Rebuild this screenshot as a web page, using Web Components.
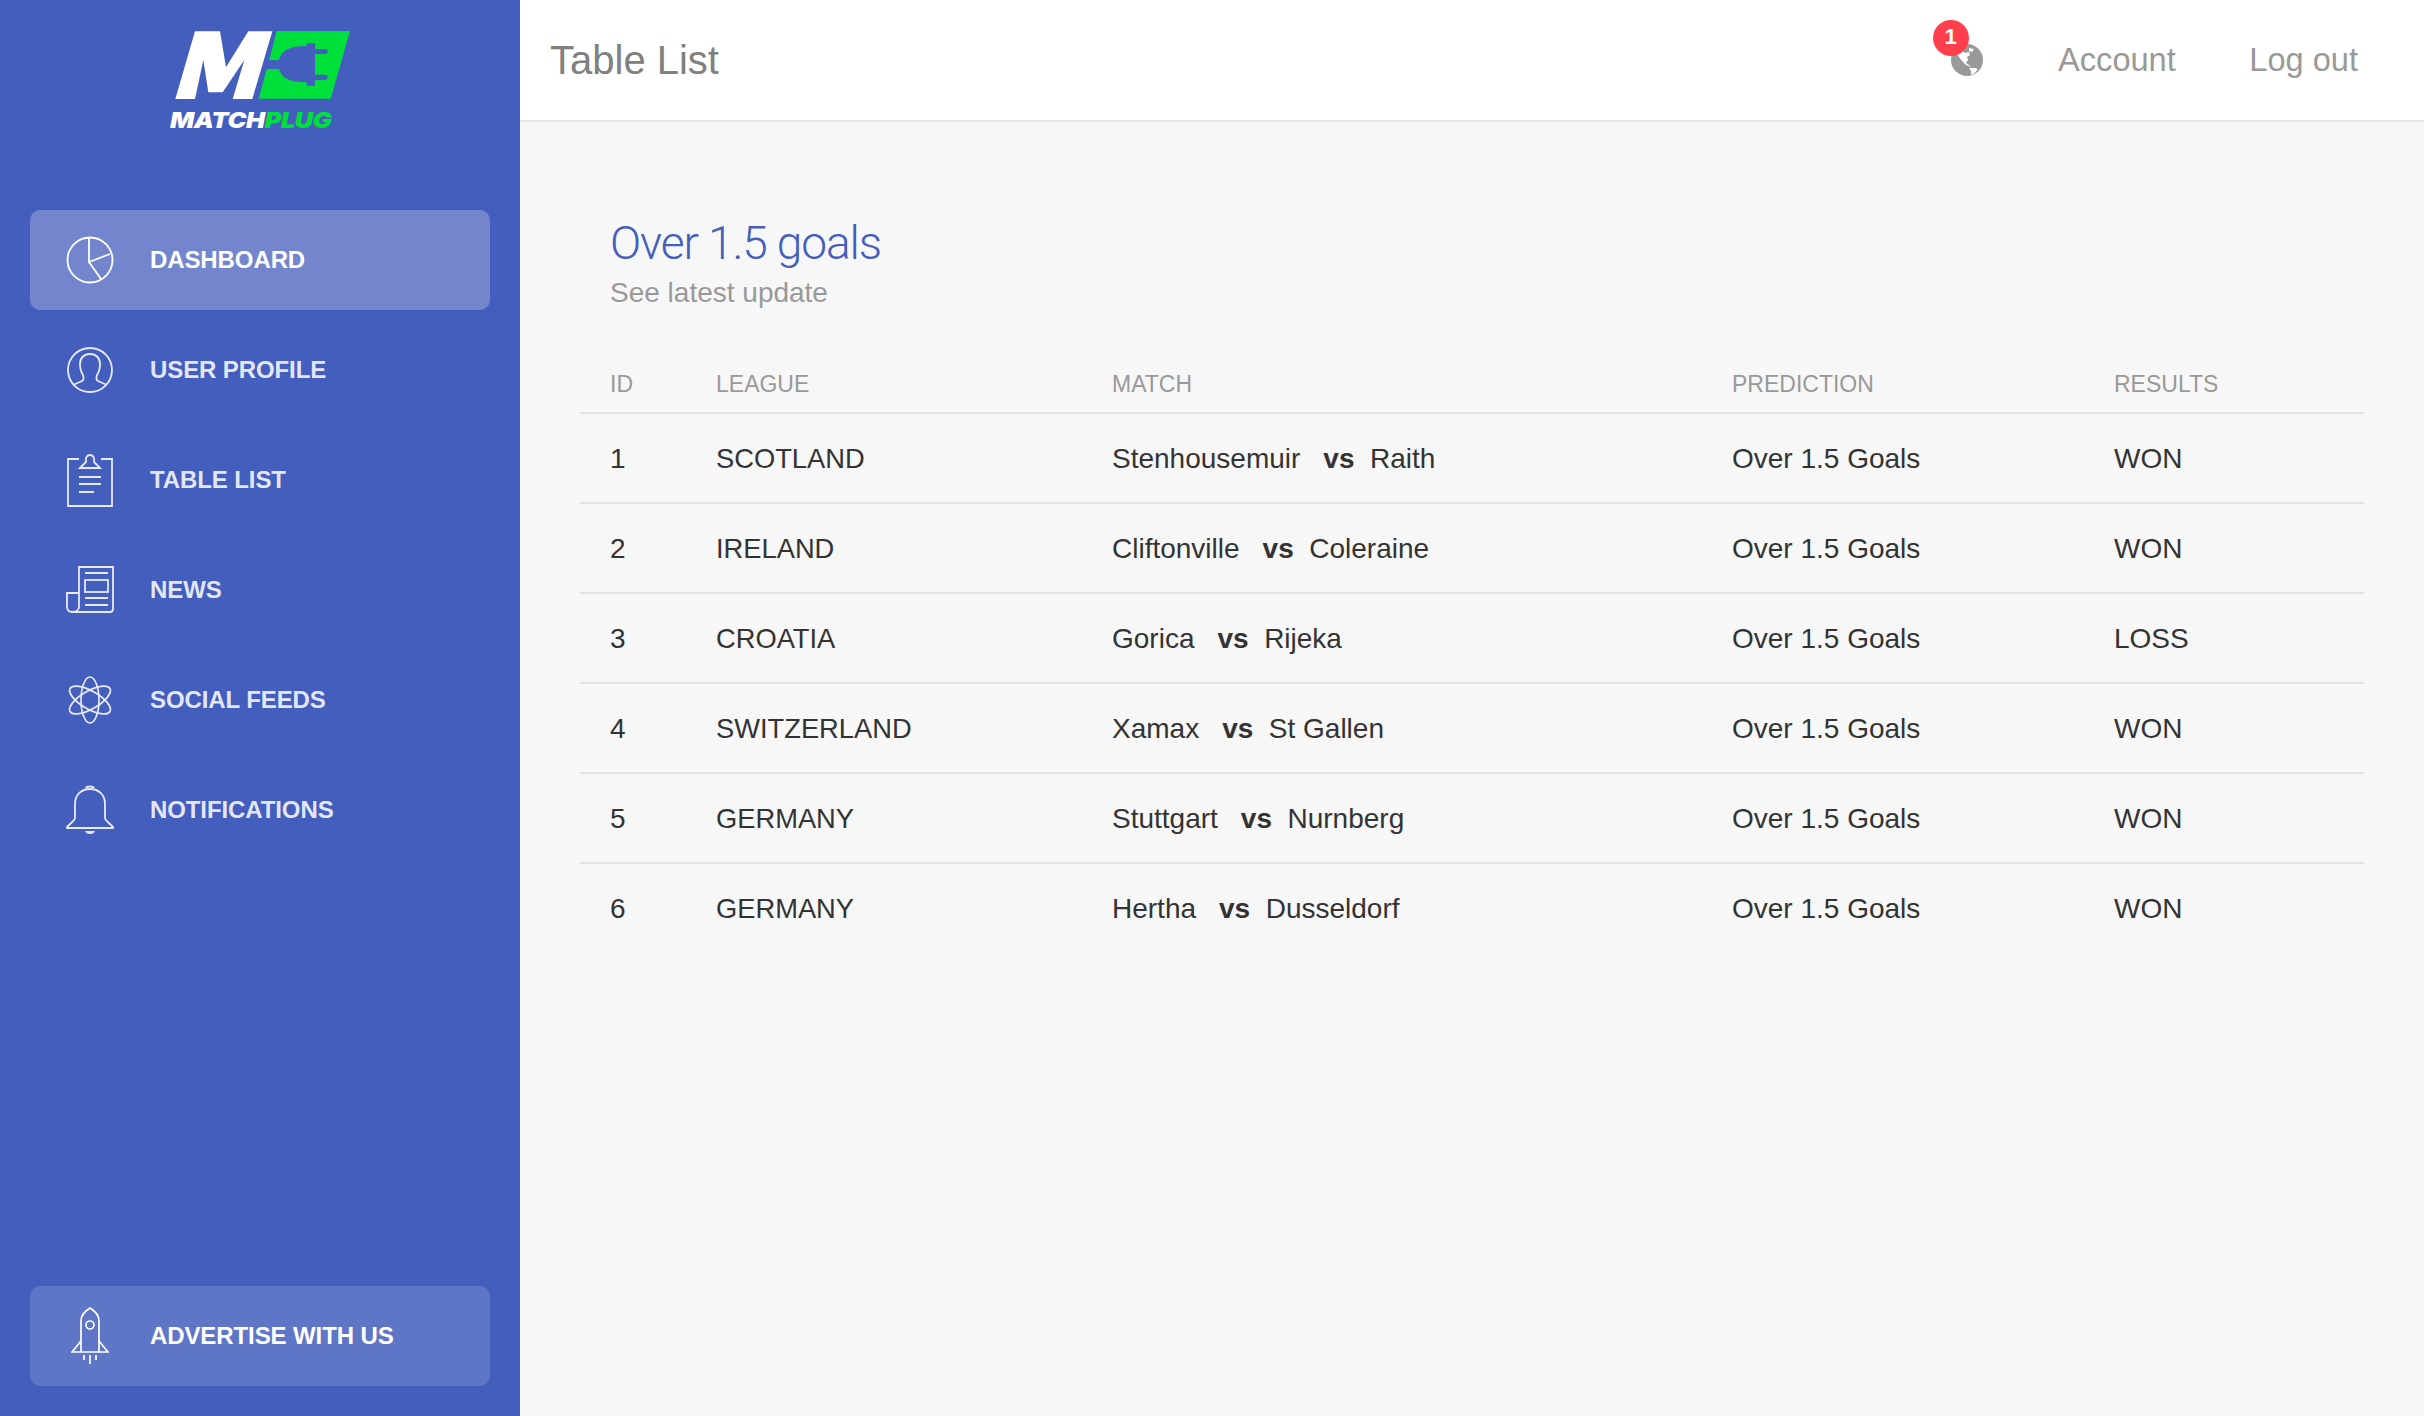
<!DOCTYPE html>
<html lang="en">
<head>
<meta charset="utf-8">
<title>Table List</title>
<style>
    html, body { margin: 0; height: 100%; }
    body { font-family: "Liberation Sans", Arial, sans-serif; background: #f7f7f7; }
</style>
</head>
<body>
<app-shell>
    <side-bar slot="side">
        <brand-logo slot="logo"></brand-logo>
        <nav-item active label="DASHBOARD">
            <svg width="48" height="48" viewBox="0 0 48 48" fill="none" stroke="#fff" stroke-width="1.8"><circle cx="24" cy="24" r="22.5"/><path d="M23 2v24l21-8M23 26l12 17"/></svg>
        </nav-item>
        <nav-item label="USER PROFILE">
            <svg width="48" height="48" viewBox="0 0 48 48" fill="none" stroke="#e6e9f6" stroke-width="1.8"><circle cx="24" cy="24" r="22"/><path d="M7 39l9-4c2-1 2-3 1-6-2-3-3-7-3-11 0-6 4-10 10-10s10 4 10 10c0 4-1 8-3 11-1 3-1 5 1 6l9 4"/></svg>
        </nav-item>
        <nav-item label="TABLE LIST">
            <svg width="46" height="54" viewBox="0 0 46 54" fill="none" stroke="#e6e9f6" stroke-width="1.8"><path d="M12 6H1v47h44V6H34"/><path d="M13 15l6-6c-1-4 1-7 4-7s5 3 4 7l6 6z"/><path d="M12 24h22M12 31h22M12 39h15"/></svg>
        </nav-item>
        <nav-item label="NEWS">
            <svg width="48" height="48" viewBox="0 0 48 48" fill="none" stroke="#e6e9f6" stroke-width="1.8"><path d="M13 41V1h34v42c0 2-1 3-3 3H6c-3 0-5-2-5-5V27h12"/><path d="M6 46c4 0 7-2 7-5"/><path d="M19 7h23M19 32h23M19 39h23"/><rect x="19" y="14" width="23" height="12"/></svg>
        </nav-item>
        <nav-item label="SOCIAL FEEDS">
            <svg width="44" height="48" viewBox="0 0 44 48" fill="none" stroke="#e6e9f6" stroke-width="1.7"><ellipse cx="22" cy="24" rx="9" ry="23"/><ellipse cx="22" cy="24" rx="9" ry="23" transform="rotate(60 22 24)"/><ellipse cx="22" cy="24" rx="9" ry="23" transform="rotate(120 22 24)"/></svg>
        </nav-item>
        <nav-item label="NOTIFICATIONS">
            <svg width="48" height="50" viewBox="0 0 48 50" fill="none" stroke="#e6e9f6" stroke-width="1.8"><path d="M9 33V19C9 10 15 4 24 4s15 6 15 15v14c0 2 2 3 8 9v1H1v-1c6-6 8-7 8-9z"/><path d="M20 3c1-2 7-2 8 0" stroke-width="2"/><path d="M19 46h10c-1 4-9 4-10 0z" fill="#e6e9f6" stroke="none"/></svg>
        </nav-item>
        <nav-item slot="footer" promo label="ADVERTISE WITH US">
            <svg width="38" height="58" viewBox="0 0 38 58" fill="none" stroke="#fff" stroke-width="1.7"><path d="M10 45V14C10 9 14 4 19 1c5 3 9 8 9 13v31"/><circle cx="19" cy="18" r="4"/><path d="M10 34L1 45h36l-9-11"/><path d="M13 48v5M19 48v9M25 48v5"/></svg>
        </nav-item>
    </side-bar>
    <top-bar slot="top" heading="Table List">
        <a-notify count="1"></a-notify>
        <top-link>Account</top-link>
        <top-link>Log out</top-link>
    </top-bar>
    <match-card heading="Over 1.5 goals" sub="See latest update">
        <match-row head rank="ID" league="LEAGUE" prediction="PREDICTION" result="RESULTS">MATCH</match-row>
        <match-row rank="1" league="SCOTLAND" home="Stenhousemuir" away="Raith" prediction="Over 1.5 Goals" result="WON"></match-row>
        <match-row rank="2" league="IRELAND" home="Cliftonville" away="Coleraine" prediction="Over 1.5 Goals" result="WON"></match-row>
        <match-row rank="3" league="CROATIA" home="Gorica" away="Rijeka" prediction="Over 1.5 Goals" result="LOSS"></match-row>
        <match-row rank="4" league="SWITZERLAND" home="Xamax" away="St Gallen" prediction="Over 1.5 Goals" result="WON"></match-row>
        <match-row rank="5" league="GERMANY" home="Stuttgart" away="Nurnberg" prediction="Over 1.5 Goals" result="WON"></match-row>
        <match-row last rank="6" league="GERMANY" home="Hertha" away="Dusseldorf" prediction="Over 1.5 Goals" result="WON"></match-row>
    </match-card>
</app-shell>

<script>
(function () {
    function define(name, css, html) {
        class Comp extends HTMLElement {
            constructor() {
                super();
                this.attachShadow({ mode: "open" });
            }

            connectedCallback() {
                const markup = typeof html === "function" ? html(this) : html;
                this.shadowRoot.innerHTML = `<style>${css}</style>${markup}`;
            }
        }
        customElements.define(name, Comp);
    }

    define("app-shell", `
        :host { display: grid; grid-template-columns: 520px 1fr; grid-template-rows: 122px 1fr; height: 1416px; }
        .side { grid-row: 1 / 3; display: flex; }
        .side ::slotted(*) { flex: 1; }
    `, `
        <div class="side"><slot name="side"></slot></div>
        <slot name="top"></slot>
        <slot></slot>
    `);

    define("side-bar", `
        :host { display: flex; flex-direction: column; background: #445ebd; padding: 0 30px 30px; box-sizing: border-box; height: 1416px; }
        .logo { height: 210px; }
        .nav { display: flex; flex-direction: column; gap: 10px; flex: 1; }
    `, `
        <div class="logo"><slot name="logo"></slot></div>
        <div class="nav"><slot></slot></div>
        <slot name="footer"></slot>
    `);

    define("brand-logo", `
        :host { display: flex; flex-direction: column; align-items: flex-start; padding: 30px 0 0 140px; }
        svg { display: block; }
        .word { font: italic 900 22px/24px Inter, "Liberation Sans", sans-serif; color: #fff; margin-top: 6px; letter-spacing: -0.3px; transform: scaleX(1.15); transform-origin: left center; }
        .word span { color: #00e03c; }
    `, `
        <svg width="190" height="72" viewBox="510 88 570 216">
            <path fill="#fff" d="M526 295 585 92H660L678 200 745 92H817L757 295H698L733 178 668 275H625L610 178 585 295Z"/>
            <path fill="#00e03c" d="M830 91H1050L992 294H776L800 205H837C845 230 865 245 920 245V255H945V238H975C986 238 986 222 975 222H945V160H975C986 160 986 145 975 145H945V128H920V136C865 136 845 150 837 178H808Z"/>
        </svg>
        <div class="word">MATCH<span>PLUG</span></div>
    `);

    define("nav-item", `
        :host { display: flex; align-items: center; height: 100px; border-radius: 10px; color: rgba(255, 255, 255, 0.87); }
        :host([active]) { background: rgba(255, 255, 255, 0.25); color: #fff; }
        :host([promo]) { background: rgba(255, 255, 255, 0.15); color: #fff; }
        .icon { width: 60px; margin-left: 30px; display: flex; justify-content: center; align-items: center; }
        .label { margin-left: 30px; font-size: 24px; font-weight: 700; letter-spacing: -0.1px; }
    `, (el) => `
        <div class="icon"><slot></slot></div>
        <div class="label">${el.getAttribute("label")}</div>
    `);

    define("top-bar", `
        :host { display: flex; align-items: center; height: 120px; background: #fff; border-bottom: 2px solid #e5e5e5; padding: 0 66px 0 30px; }
        .title { font-size: 40px; color: #808080; flex: 1; }
        .right { display: flex; align-items: center; }
    `, (el) => `
        <div class="title">${el.getAttribute("heading")}</div>
        <div class="right"><slot></slot></div>
    `);

    define("a-notify", `
        :host { display: block; position: relative; width: 32px; height: 32px; margin-right: 75.5px; }
        svg { display: block; }
        .badge { position: absolute; left: -18px; top: -24px; width: 36px; height: 36px; border-radius: 50%; background: #ff3f4e; color: #fff; font-size: 22px; font-weight: 700; line-height: 34px; text-align: center; }
    `, (el) => `
        <svg width="32" height="32" viewBox="0 0 32 32"><circle cx="16" cy="16" r="16" fill="#999"/><path fill="#fff" d="M5 9l7-2 2 2 4-1 1 3-3 2 1 3-2 3 3 2 2 2-5-2-4-4-3-4zM18 24h6l3 1c-2 3-4 5-7 6v-4zM18 4l5 1-2 3-3-1z"/></svg>
        <div class="badge">${el.getAttribute("count")}</div>
    `);

    define("top-link", `
        :host { display: block; font-size: 32.6px; color: #999; margin-left: 73.5px; }
        :host(:first-of-type) { margin-left: 0; }
    `, `<slot></slot>`);

    define("match-card", `
        :host { display: block; padding: 91px 60px 0; }
        .intro { padding-left: 30px; }
        h2 { margin: 0; font: 300 46px/60px Roboto, "Liberation Sans", sans-serif; letter-spacing: -1.1px; color: #445ebd; }
        p { margin: 1px 0 0; font-size: 28px; line-height: 38px; color: #999; }
        .rows { margin-top: 43px; }
    `, (el) => `
        <div class="intro">
            <h2>${el.getAttribute("heading")}</h2>
            <p>${el.getAttribute("sub")}</p>
        </div>
        <div class="rows"><slot></slot></div>
    `);

    define("match-row", `
        :host { display: grid; grid-template-columns: 106px 396px 620px 382px 1fr; align-items: center; height: 86px; padding: 2px 0 0 30px; border-bottom: 2px solid #e2e2e2; font-size: 28px; color: #333; }
        :host > div { white-space: nowrap; }
        :host([head]) { height: 55px; font-size: 23px; color: #999; }
        :host([last]) { border-bottom: 0; }
        .league { font-size: 27.3px; }
        :host([head]) .league { font-size: 23px; }
        b { margin: 0 15.5px 0 23px; font-weight: 700; }
    `, (el) => {
        const a = (n) => el.getAttribute(n) || "";
        const match = el.hasAttribute("head")
            ? "<slot></slot>"
            : `${a("home")}<b>vs</b>${a("away")}`;
        return `<div>${a("rank")}</div><div class="league">${a("league")}</div><div>${match}</div><div>${a("prediction")}</div><div>${a("result")}</div>`;
    });
})();
</script>
</body>
</html>
